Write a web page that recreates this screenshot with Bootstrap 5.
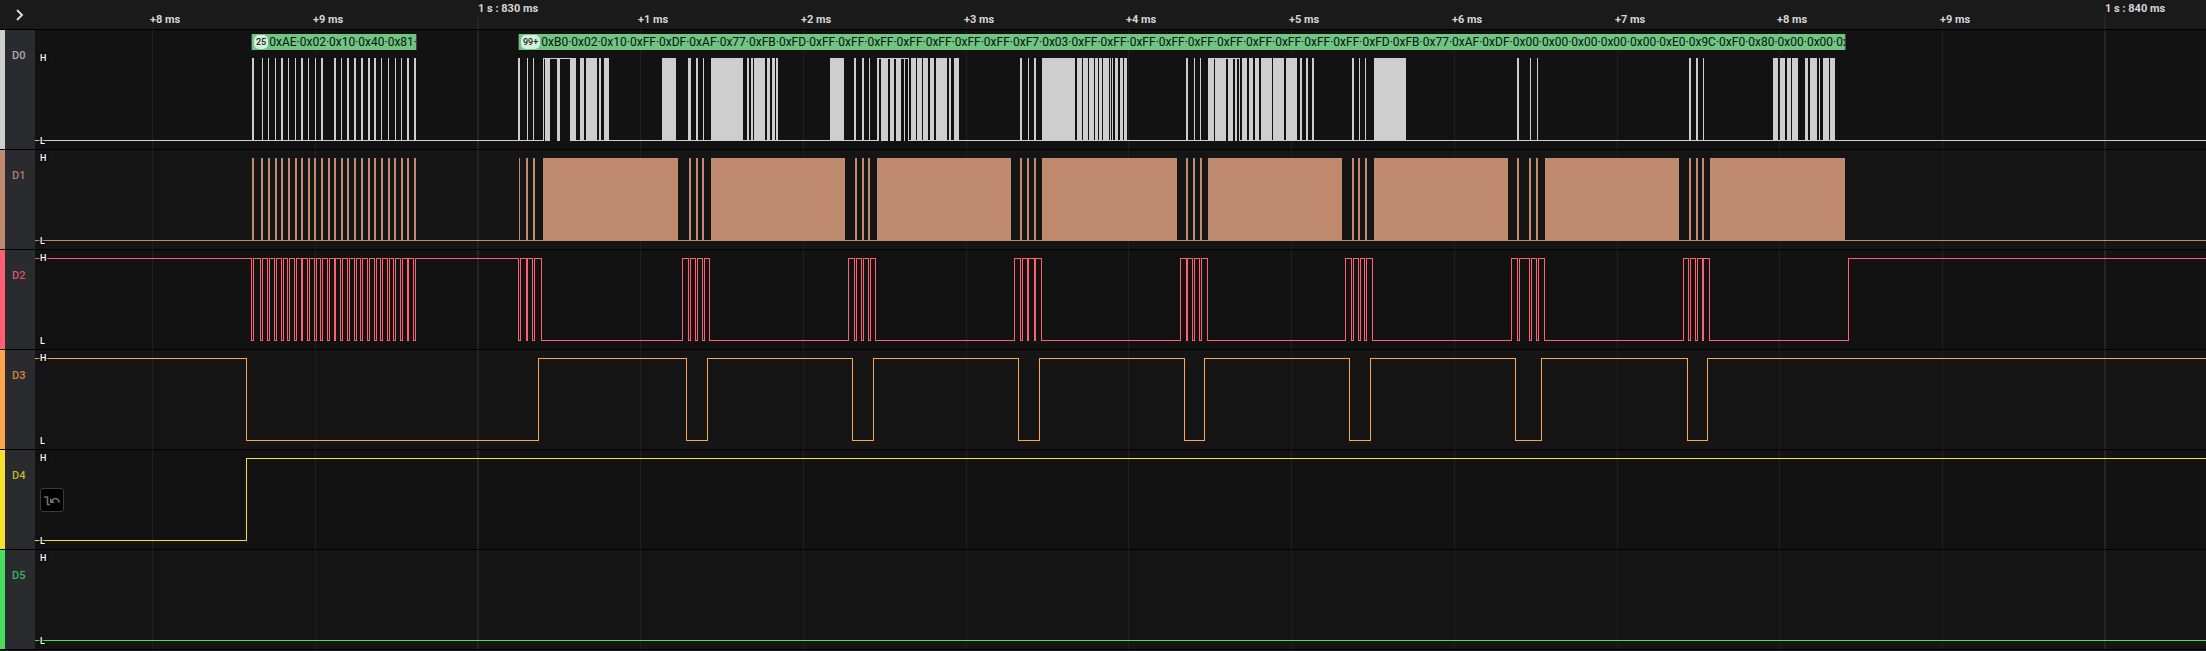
<!DOCTYPE html>
<html lang="en">
<head>
<meta charset="utf-8">
<meta name="viewport" content="width=device-width, initial-scale=1">
<title>Logic analyzer</title>
<link href="https://cdn.jsdelivr.net/npm/bootstrap@5.3.0/dist/css/bootstrap.min.css" rel="stylesheet">
<style>
  body { background: #1a1a1a; color: #d6d6d6; font-family: Roboto, "Liberation Sans", sans-serif; font-size: 11px; line-height: 14px; }
  .ruler, .lane { border-bottom: 1px solid #000; }
  .ruler { height: 30px; background: #1a1a1a; }
  .lane { height: 100px; background: #121212; }
  .lane.tall { height: 120px; }
  .lane:nth-of-type(even) { background: #151515; }
  .side { width: 35px; background: #2a2b2f; }
  .lane .side { border-left: 5px solid var(--wire); padding-top: 19px; padding-left: 7px; color: var(--tag); font-weight: 500; }
  .toggle { width: 35px; color: #d0d0d0; background: #2a2b2f; border-radius: 0; }
  .track svg.plot { display: block; width: 100%; height: 100%; }
  .tick { font-weight: 700; top: 13px; margin-left: -2px; white-space: pre; }
  .tick.major { top: 2px; margin-left: 0; }
  .level { left: 5px; font-size: 9px; line-height: 10px; font-weight: 500; color: #fff; text-shadow: 0 0 2px #111, 0 0 2px #111, 1px 0 2px #111, -1px 0 2px #111; }
  .level.hi { top: 3px; }
  .level.lo { bottom: 3px; }
  .tall .level.hi { top: 23px; }
  .note { top: 4px; height: 16px; background: #70c583; color: #08140a; border-left: 1px solid #444; border-right: 1px solid #444; font-size: 12px; line-height: 16px; padding-left: 2px; gap: 1px; }
  .count { background: #d6efdb; color: #1b2a1e; font-size: 9px; font-weight: 500; line-height: 14px; border-radius: 5px; padding: 0 2px; }
  .trigger { left: 5px; top: 38px; width: 24px; height: 24px; background: #000; border: 1px solid #3b3b3e; border-radius: 3px; color: #6d6f78; }
</style>
<script src="https://cdn.jsdelivr.net/npm/bootstrap@5.3.0/dist/js/bootstrap.bundle.min.js"></script>
</head>
<body class="overflow-hidden">
<main class="d-flex flex-column">
  <header class="ruler d-flex">
    <button type="button" class="toggle btn p-0 border-0 flex-shrink-0 d-flex align-items-center justify-content-center" aria-label="Expand channels">
      <svg width="35" height="29" viewBox="0 0 35 29" fill="none" stroke="currentColor" stroke-width="2"><path d="M17 10l5 5-5 5"/></svg>
    </button>
    <div class="track flex-grow-1 position-relative overflow-hidden" id="ruler"><svg class="plot"></svg></div>
  </header>
  <div id="lanes"></div>
</main>
<script>
  // Timeline: x positions are measured from the window edge; the tracks start after the channel column.
  const COLUMN = 35, FAR = 20000;
  const ticks = [
    [152, '+8 ms'], [315, '+9 ms'], [478, '1 s : 830 ms', 1], [640, '+1 ms'], [803, '+2 ms'], [966, '+3 ms'],
    [1128, '+4 ms'], [1291, '+5 ms'], [1454, '+6 ms'], [1617, '+7 ms'], [1779, '+8 ms'], [1942, '+9 ms'], [2105, '1 s : 840 ms', 1]
  ];
  // Pulse lists hold [start, width] pairs.
  const dataPulses = [[252,2],[262,1],[268,1],[275,1],[281,2],[288,1],[295,1],[301,2],[308,1],[315,1],[321,2],[334,2],[341,1],[347,2],[354,2],[361,2],[368,2],[374,2],[381,1],[388,1],[395,1],[401,1],[407,2],[414,2],
    [518,2],[527,1],[533,1],[543,1],[545,5],[557,3],[570,6],[580,4],[586,11],[599,2],[604,5],[662,14],[688,3],[696,2],[703,1],[711,32],[747,2],[751,2],[754,11],[767,3],[772,3],[776,2],
    [830,14],[854,2],[862,2],[869,1],[877,2],[881,7],[890,4],[896,5],[904,1],[908,1],[911,5],[917,5],[923,5],[930,4],[936,11],[949,2],[954,5],
    [1020,2],[1028,1],[1034,2],[1042,33],[1077,5],[1083,5],[1089,5],[1095,3],[1099,3],[1103,6],[1110,1],[1112,1],[1115,3],[1120,3],[1124,3],
    [1186,2],[1194,1],[1200,1],[1208,6],[1215,11],[1228,5],[1235,2],[1239,1],[1242,5],[1249,4],[1255,4],[1261,11],[1273,11],[1286,11],[1300,2],[1306,2],[1312,2],
    [1352,2],[1359,1],[1365,1],[1374,32],[1517,2],[1530,1],[1537,1],[1689,2],[1696,2],[1703,1],
    [1773,5],[1780,5],[1787,4],[1792,6],[1805,3],[1810,7],[1819,1],[1823,6],[1830,5]];
  // Spans where the data line idles high.
  const dataHigh = [[543,570],[877,909],[1208,1240]];
  const clockPulses = [252,261,268,275,281,288,295,301,308,314,321,328,334,341,347,354,361,368,374,381,388,394,401,407,414].map(x => [x, 2]).concat(
    [[519,1],[526,2],[533,2],[543,135],[689,2],[696,2],[702,2],[711,134],[855,2],[862,2],[868,2],[877,134],[1020,2],[1027,2],[1034,2],[1042,135],[1186,2],[1193,2],[1200,2],[1208,134],[1352,2],[1358,2],[1365,2],[1374,134],[1517,2],[1529,2],[1536,2],[1545,134],[1689,2],[1696,2],[1702,2],[1710,135]]);
  const selectEdges = [251,253,260,262,267,269,274,276,281,283,287,289,294,296,301,302,307,309,314,316,320,322,327,329,334,335,340,342,347,349,354,356,360,362,367,369,374,376,380,382,387,389,393,395,400,402,407,408,413,415,
    518,520,526,527,532,534,541,682,688,690,695,697,702,704,709,848,854,856,861,863,868,870,875,1014,1020,1022,1027,1028,1034,1035,1041,1180,1186,1187,1192,1194,1199,1201,1207,1345,1351,1353,1358,1360,1364,1366,1372,1511,1517,1519,1529,1531,1536,1538,1544,1683,1688,1690,1695,1697,1702,1703,1709,1848];
  const bytes = list => list.split(' ').map(b => '0x' + b).join('·');
  const lanes = [
    { name: 'D0', wire: '#cecece', tag: '#adadad', tall: true, pulses: dataPulses, high: dataHigh,
      notes: [[251, 166, '25', bytes('AE 02 10 40 81') + '·'],
              [518, 1328, '99+', bytes('B0 02 10 FF DF AF 77 FB FD FF FF FF FF FF FF FF F7 03 FF FF FF FF FF FF FF FF FF FF FD FB 77 AF DF 00 00 00 00 00 E0 9C F0 80 00 00') + '·0x']] },
    { name: 'D1', wire: '#c08a6f', tag: '#b37f66', pulses: clockPulses },
    { name: 'D2', wire: '#ff5e73', tag: '#d95468', start: 1, edges: selectEdges },
    { name: 'D3', wire: '#ffa64d', tag: '#cc8844', start: 1, edges: [246,538,686,707,852,873,1018,1039,1184,1204,1349,1370,1515,1541,1687,1707] },
    { name: 'D4', wire: '#f5e22f', tag: '#c4b62f', start: 0, edges: [246], trigger: true },
    { name: 'D5', wire: '#4ae05f', tag: '#3fb653', start: 0, edges: [] }
  ];
  const bar = (x, y, w, h) => `M${x - COLUMN} ${y}h${w}v${h}h${-w}z`;
  const grid = top => ticks.map(([x, , major]) => `<rect x="${x - COLUMN - (major ? 1 : 0)}" y="${major ? top[0] : top[1]}" width="${major ? 2 : 1}" height="200" fill="${major ? '#242424' : '#202020'}"/>`).join('');

  function wave(lane) {
    const hi = lane.tall ? 28 : 8, lo = hi + 82;
    let d = '';
    if (lane.pulses) {
      lane.pulses.forEach(([x, w]) => d += bar(x, hi, w, 83));
      let from = COLUMN;
      (lane.high || []).forEach(([a, b]) => { d += bar(a, hi, b - a, 1) + bar(from, lo, a - from, 1); from = b; });
      return d + bar(from, lo, FAR, 1);
    }
    let level = lane.start, from = COLUMN;
    lane.edges.forEach(x => {
      d += bar(from, level ? hi : lo, x - from + 1, 1) + bar(x, hi, 1, 83);
      level = 1 - level; from = x;
    });
    return d + bar(from, level ? hi : lo, FAR, 1);
  }

  const ruler = document.getElementById('ruler');
  ruler.querySelector('svg').innerHTML = grid([14, 25]);
  ruler.insertAdjacentHTML('beforeend', ticks.map(([x, text, major]) =>
    `<span class="tick position-absolute ${major ? 'major' : ''}" style="left:${x - COLUMN}px">${text}</span>`).join(''));

  const trigger = `<button type="button" class="trigger btn p-0 position-absolute d-flex align-items-center justify-content-center" aria-label="Reset trigger">
    <svg width="22" height="22" viewBox="0 0 22 22" fill="none" stroke="currentColor"><path stroke-width="1.6" d="M3 8h3.500v7.500H9"/><path stroke-width="1.6" d="M11 11.500c2-3 6-3 7.500 2"/><path fill="currentColor" stroke="none" d="M9 9v5h5z"/></svg></button>`;

  document.getElementById('lanes').innerHTML = lanes.map(lane => `
    <section class="lane d-flex ${lane.tall ? 'tall' : ''}" style="--wire:${lane.wire};--tag:${lane.tag}">
      <div class="side flex-shrink-0">${lane.name}</div>
      <div class="track flex-grow-1 position-relative overflow-hidden">
        <svg class="plot" shape-rendering="crispEdges">${grid([0, 0])}<path fill="${lane.wire}" d="${wave(lane)}"/></svg>
        <span class="level hi position-absolute">H</span><span class="level lo position-absolute">L</span>
        ${(lane.notes || []).map(([x, w, n, text]) => `<div class="note position-absolute d-flex align-items-center overflow-hidden text-nowrap" style="left:${x - COLUMN}px;width:${w}px"><span class="count">${n}</span><span>${text}</span></div>`).join('')}
        ${lane.trigger ? trigger : ''}
      </div>
    </section>`).join('');
</script>
</body>
</html>
